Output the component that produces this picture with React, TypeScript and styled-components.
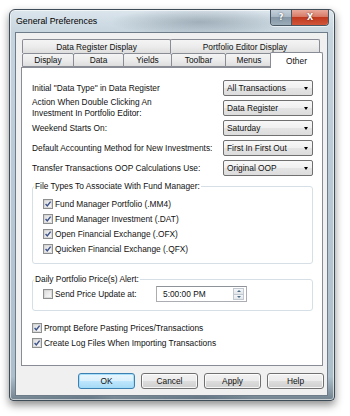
import React from 'react';
import styled, { createGlobalStyle } from 'styled-components';

const GlobalStyle = createGlobalStyle`
  html, body {
    margin: 0;
    padding: 0;
    background: #ffffff;
  }
  body {
    font-family: 'Liberation Sans', Arial, sans-serif;
    font-size: 8.35px;
    color: #111;
  }
`;

const Stage = styled.div`
  padding: 9px 0 0 9px;
  height: 416px;
  box-sizing: border-box;
`;

const Window = styled.div`
  width: 326px;
  height: 392px;
  box-sizing: border-box;
  display: flex;
  flex-direction: column;
  padding: 0 6px 4px 5px;
  border: 1px solid #3f4d58;
  border-radius: 6px 6px 4px 4px;
  background:
    linear-gradient(90deg, transparent 0%, rgba(40, 60, 80, 0.18) 25%, transparent 32%, rgba(40, 60, 80, 0.22) 60%, transparent 75%) bottom / 100% 5px no-repeat,
    radial-gradient(ellipse 90px 14px at 190px 12px, rgba(70, 90, 105, 0.35), transparent) top / 100% 32px no-repeat,
    linear-gradient(180deg, #dbe5ec 0%, #c6d4de 6%, #bacad6 40%, #aebfcc 94%, #72838f 100%);
  box-shadow: 0 4px 9px rgba(0, 0, 0, 0.45), inset 0 0 0 1px rgba(255, 255, 255, 0.6);
`;

const TitleBar = styled.div`
  height: 22px;
  flex: none;
  display: flex;
  align-items: flex-start;
  justify-content: space-between;
  padding-left: 1px;
`;

const Title = styled.span`
  font-size: 8.8px;
  line-height: 22px;
  color: #000;
`;

const CaptionGroup = styled.div`
  display: flex;
  margin-right: -1px;
  border: 1px solid #4a5863;
  border-top: none;
  border-radius: 0 0 4px 4px;
  overflow: hidden;
  box-shadow: 0 1px 0 rgba(255, 255, 255, 0.6);
`;

const CaptionButton = styled.div<{ $close?: boolean }>`
  height: 15px;
  width: ${(p) => (p.$close ? '36px' : '20px')};
  display: flex;
  align-items: center;
  justify-content: center;
  color: #fff;
  font-family: 'DejaVu Sans', sans-serif;
  font-weight: bold;
  font-size: 8px;
  text-shadow: 0 0 2px rgba(0, 0, 0, 0.6);
  border-left: ${(p) => (p.$close ? '1px solid #4a5863' : 'none')};
  background: ${(p) =>
    p.$close
      ? 'linear-gradient(180deg, #e9a99b 0%, #d77a66 45%, #c0391f 50%, #d0553a 100%)'
      : 'linear-gradient(180deg, #c6d2dc 0%, #a8b8c5 45%, #8597a5 50%, #9cadba 100%)'};
`;

const Client = styled.div`
  flex: 1;
  display: flex;
  flex-direction: column;
  background: #f0f0f0;
  border: 1px solid #6d7c88;
  padding: 6px 4px 6px 5px;
`;

const TabRow = styled.div`
  display: flex;
  align-items: flex-end;
  height: 14px;
  padding-left: 1px;
`;

const Tab = styled.div<{ $w: number; $active?: boolean; $back?: boolean }>`
  box-sizing: border-box;
  width: ${(p) => p.$w}px;
  height: ${(p) => (p.$active ? 16 : 14)}px;
  margin-left: ${(p) => (p.$active ? -3 : -1)}px;
  margin-bottom: ${(p) => (p.$active ? -1 : 0)}px;
  position: ${(p) => (p.$active ? 'relative' : 'static')};
  z-index: ${(p) => (p.$active ? 2 : 'auto')};
  display: flex;
  align-items: center;
  justify-content: center;
  border: 1px solid #898c95;
  border-bottom: ${(p) => (p.$active || p.$back ? 'none' : '1px solid #898c95')};
  border-radius: 2px 2px 0 0;
  background: ${(p) => (p.$active ? '#ffffff' : 'linear-gradient(180deg, #f4f4f4 0%, #ececec 50%, #dedede 100%)')};
  color: #111;
  white-space: nowrap;
  &:first-child {
    margin-left: 0;
  }
`;

const Panel = styled.div`
  flex: 1;
  display: flex;
  flex-direction: column;
  background: #ffffff;
  border: 1px solid #898c95;
  padding: 12px 9px 0 10px;
`;

const FormGrid = styled.div`
  display: grid;
  grid-template-columns: 1fr 90px;
  grid-auto-rows: 16px;
  row-gap: 4px;
  align-items: center;
`;

const Label = styled.div`
  line-height: 11px;
  white-space: nowrap;
`;

const Combo = styled.div`
  box-sizing: border-box;
  height: 16px;
  display: flex;
  align-items: center;
  justify-content: space-between;
  padding: 0 4px 0 3px;
  border: 1px solid #707070;
  border-radius: 2px;
  background: linear-gradient(180deg, #f8f8f8 0%, #f0f0f0 50%, #e4e4e4 51%, #dcdcdc 100%);
`;

const Arrow = styled.span`
  width: 0;
  height: 0;
  border-left: 2.5px solid transparent;
  border-right: 2.5px solid transparent;
  border-top: 3px solid #000;
`;

const Group = styled.fieldset<{ $top: number; $pt: number; $pb: number }>`
  margin: ${(p) => p.$top}px 0 0 0;
  padding: ${(p) => p.$pt}px 0 ${(p) => p.$pb}px 10px;
  border: 1px solid #d5dfe5;
  border-radius: 3px;
  min-width: 0;
`;

const Legend = styled.legend`
  margin-left: -9px;
  padding: 0 1px;
  line-height: 11px;
  color: #111;
`;

const CheckRow = styled.label`
  height: 15px;
  display: flex;
  align-items: center;
  gap: 2px;
  white-space: nowrap;
`;

const TimeRow = styled.div`
  height: 16px;
  display: flex;
  align-items: center;
`;

const TimeLabel = styled(CheckRow)`
  width: 113px;
`;

const TimeEdit = styled.div`
  box-sizing: border-box;
  width: 91px;
  height: 16px;
  display: flex;
  align-items: center;
  justify-content: space-between;
  padding: 0 2px 0 6px;
  border: 1px solid #abadb3;
  border-top-color: #8e9299;
  background: #fff;
`;

const Spin = styled.div`
  width: 11px;
  height: 12px;
  display: flex;
  flex-direction: column;
`;

const SpinPart = styled.div`
  flex: 1;
  display: flex;
  align-items: center;
  justify-content: center;
  border: 1px solid #c2c8cf;
  background: linear-gradient(180deg, #f5f7f9, #e1e6ea);
  & + & {
    border-top: none;
  }
`;

const SpinArrow = styled.span<{ $up?: boolean }>`
  width: 0;
  height: 0;
  border-left: 2px solid transparent;
  border-right: 2px solid transparent;
  ${(p) => (p.$up ? 'border-bottom: 2px solid #4d6a85;' : 'border-top: 2px solid #4d6a85;')}
`;

const Options = styled.div`
  margin-top: 9px;
`;

const ButtonRow = styled.div`
  margin-top: 7px;
  height: 16px;
  display: flex;
  justify-content: flex-end;
  gap: 6px;
  margin-right: -1px;
`;

const Button = styled.div<{ $default?: boolean }>`
  box-sizing: border-box;
  width: 57px;
  height: 16px;
  display: flex;
  align-items: center;
  justify-content: center;
  border: 1px solid ${(p) => (p.$default ? '#3c7fb1' : '#707070')};
  border-radius: 3px;
  box-shadow: inset 0 0 0 1px ${(p) => (p.$default ? 'rgba(160,220,250,0.9)' : 'rgba(255,255,255,0.8)')};
  background: ${(p) =>
    p.$default
      ? 'linear-gradient(180deg, #eaf6fd 0%, #d9f0fc 50%, #bee6fd 51%, #a7d9f5 100%)'
      : 'linear-gradient(180deg, #f2f2f2 0%, #ebebeb 50%, #dddddd 51%, #cfcfcf 100%)'};
  color: #111;
`;

function CheckBox({ checked }: { checked: boolean }) {
  return (
    <svg width="10" height="10" viewBox="0 0 10 10">
      <defs>
        <linearGradient id="cbg" x1="0" y1="0" x2="1" y2="1">
          <stop offset="0" stopColor="#dcdcdc" />
          <stop offset="1" stopColor="#fbfbfb" />
        </linearGradient>
      </defs>
      <rect x="0.5" y="0.5" width="9" height="9" fill="#fff" stroke="#8e8f8f" />
      <rect x="1.5" y="1.5" width="7" height="7" fill="url(#cbg)" stroke="#c6c6c6" strokeWidth="0.6" />
      {checked && (
        <path d="M2.6 5 L4.3 7 L7.6 2.6" fill="none" stroke="#3d528a" strokeWidth="1.4" />
      )}
    </svg>
  );
}

const topTabs = [
  { label: 'Data Register Display', w: 149 },
  { label: 'Portfolio Editor Display', w: 150 },
];

const tabs = [
  { label: 'Display', w: 52 },
  { label: 'Data', w: 51 },
  { label: 'Yields', w: 49 },
  { label: 'Toolbar', w: 55 },
  { label: 'Menus', w: 48 },
  { label: 'Other', w: 53, active: true },
];

const fields = [
  { label: 'Initial "Data Type" in Data Register', value: 'All Transactions' },
  { label: 'Action When Double Clicking An\nInvestment In Portfolio Editor:', value: 'Data Register' },
  { label: 'Weekend Starts On:', value: 'Saturday' },
  { label: 'Default Accounting Method for New Investments:', value: 'First In First Out' },
  { label: 'Transfer Transactions OOP Calculations Use:', value: 'Original OOP' },
];

const fileTypes = [
  'Fund Manager Portfolio (.MM4)',
  'Fund Manager Investment (.DAT)',
  'Open Financial Exchange (.OFX)',
  'Quicken Financial Exchange (.QFX)',
];

export default function App() {
  return (
    <Stage>
      <GlobalStyle />
      <Window>
        <TitleBar>
          <Title>General Preferences</Title>
          <CaptionGroup>
            <CaptionButton>?</CaptionButton>
            <CaptionButton $close>X</CaptionButton>
          </CaptionGroup>
        </TitleBar>
        <Client>
          <TabRow>
            {topTabs.map((t) => (
              <Tab key={t.label} $w={t.w} $back>
                {t.label}
              </Tab>
            ))}
          </TabRow>
          <TabRow>
            {tabs.map((t) => (
              <Tab key={t.label} $w={t.w} $active={t.active}>
                {t.label}
              </Tab>
            ))}
          </TabRow>
          <Panel>
            <FormGrid>
              {fields.map((f) => (
                <React.Fragment key={f.value}>
                  <Label>
                    {f.label.split('\n').map((line) => (
                      <div key={line}>{line}</div>
                    ))}
                  </Label>
                  <Combo>
                    <span>{f.value}</span>
                    <Arrow />
                  </Combo>
                </React.Fragment>
              ))}
            </FormGrid>
            <Group $top={5} $pt={4} $pb={7}>
              <Legend>File Types To Associate With Fund Manager:</Legend>
              {fileTypes.map((ft) => (
                <CheckRow key={ft}>
                  <CheckBox checked />
                  {ft}
                </CheckRow>
              ))}
            </Group>
            <Group $top={10} $pt={1} $pb={8}>
              <Legend>Daily Portfolio Price(s) Alert:</Legend>
              <TimeRow>
                <TimeLabel>
                  <CheckBox checked={false} />
                  Send Price Update at:
                </TimeLabel>
                <TimeEdit>
                  <span>5:00:00 PM</span>
                  <Spin>
                    <SpinPart>
                      <SpinArrow $up />
                    </SpinPart>
                    <SpinPart>
                      <SpinArrow />
                    </SpinPart>
                  </Spin>
                </TimeEdit>
              </TimeRow>
            </Group>
            <Options>
              <CheckRow>
                <CheckBox checked />
                Prompt Before Pasting Prices/Transactions
              </CheckRow>
              <CheckRow>
                <CheckBox checked />
                Create Log Files When Importing Transactions
              </CheckRow>
            </Options>
          </Panel>
          <ButtonRow>
            <Button $default>OK</Button>
            <Button>Cancel</Button>
            <Button>Apply</Button>
            <Button>Help</Button>
          </ButtonRow>
        </Client>
      </Window>
    </Stage>
  );
}
